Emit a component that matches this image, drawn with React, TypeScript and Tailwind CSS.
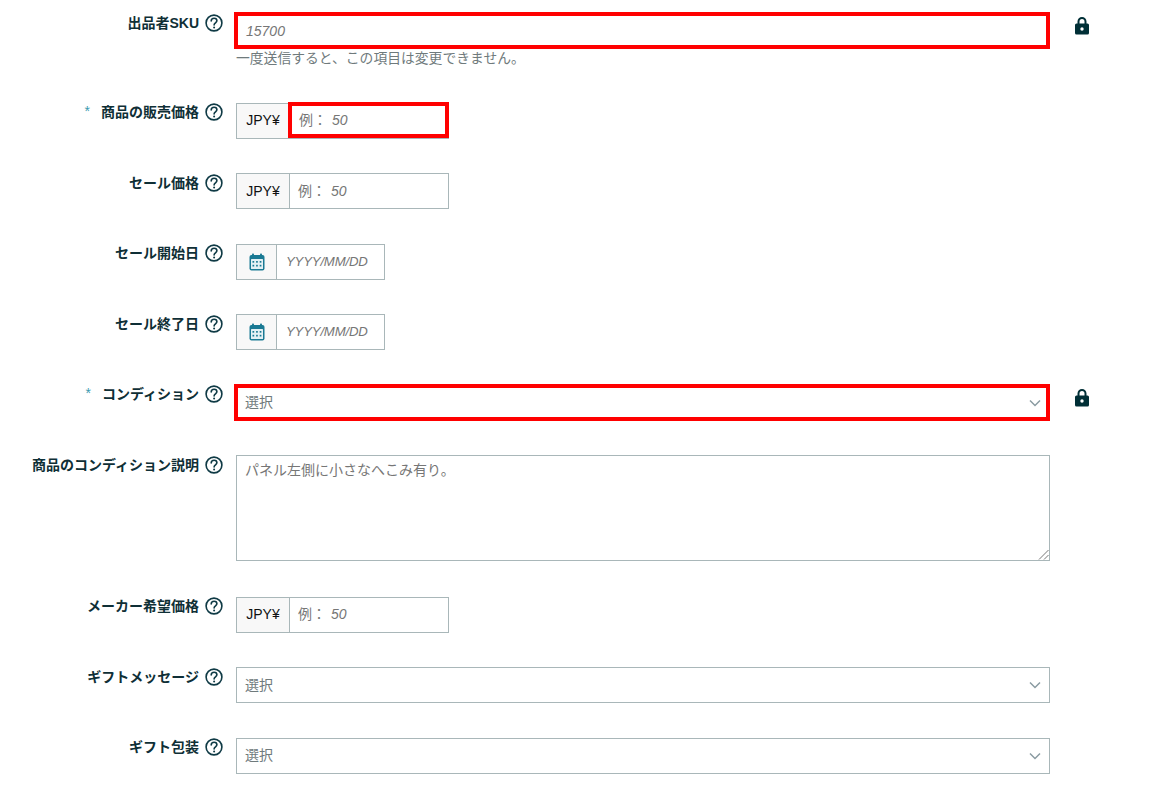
import { ReactNode } from "react";

const font = "font-['Liberation_Sans','Noto_Sans_CJK_JP',sans-serif]";

function HelpIcon() {
  return (
    <svg className="w-[18px] h-[18px] shrink-0" viewBox="0 0 18 18" fill="none">
      <circle cx="9" cy="9" r="7.900" stroke="#0f3a45" strokeWidth="1.600" />
      <path d="M6.200 7c0-1.700 1.300-2.800 2.900-2.800S11.900 5.300 11.900 6.800c0 1.900-2.800 2.100-2.800 4.100" stroke="#0f3a45" strokeWidth="1.600" strokeLinecap="round" />
      <circle cx="9.100" cy="13.400" r="1" fill="#0f3a45" />
    </svg>
  );
}

function LockIcon() {
  return (
    <svg className="w-4 h-[19px]" viewBox="0 0 16 19">
      <path d="M4.500 9V5.500a3.500 3.500 0 0 1 7 0V9" fill="none" stroke="#002f36" strokeWidth="2" />
      <rect x="1" y="7.500" width="14" height="11" rx="1.500" fill="#002f36" />
      <circle cx="8" cy="13" r="1.700" fill="#fff" />
    </svg>
  );
}

function CalendarIcon() {
  return (
    <svg className="w-4 h-[18px]" viewBox="0 0 16 18">
      <rect x="0.500" y="2" width="15" height="15.500" rx="2" fill="#1b7a94" />
      <rect x="3" y="0.500" width="2" height="3" rx="0.800" fill="#1b7a94" />
      <rect x="11" y="0.500" width="2" height="3" rx="0.800" fill="#1b7a94" />
      <rect x="2" y="6" width="12" height="10" rx="0.500" fill="#e4f0f4" />
      <g fill="#1b7a94">
        <rect x="3.500" y="8" width="1.700" height="1.700" />
        <rect x="7.100" y="8" width="1.700" height="1.700" />
        <rect x="10.700" y="8" width="1.700" height="1.700" />
        <rect x="3.500" y="11.800" width="1.700" height="1.700" />
        <rect x="7.100" y="11.800" width="1.700" height="1.700" />
        <rect x="10.700" y="11.800" width="1.700" height="1.700" />
      </g>
    </svg>
  );
}

function Chevron() {
  return (
    <svg className="w-3 h-2" viewBox="0 0 12 8" fill="none">
      <path d="M1 1.500l5 5 5-5" stroke="#8a9ba1" strokeWidth="1.500" />
    </svg>
  );
}

function Row({ label, required, locked, className, children }: { label: string; required?: boolean; locked?: boolean; className?: string; children: ReactNode }) {
  return (
    <div className={`flex items-start ${className ?? ""}`}>
      <div className="w-[223px] shrink-0 flex justify-end items-center gap-[6px] -mt-[0.5px]">
        {required && <span className="text-[14px] leading-5 text-[#3a9bb0] mr-[5px] -mt-[3px]">*</span>}
        <span className="text-[14px] leading-5 font-bold text-[#0f2f36] whitespace-nowrap">{label}</span>
        <HelpIcon />
      </div>
      <div className="ml-[13px] w-[814px] shrink-0">{children}</div>
      {locked && (
        <div className="ml-6 pt-[3px]">
          <LockIcon />
        </div>
      )}
    </div>
  );
}

function Red({ className }: { className: string }) {
  return <div className={`absolute border-4 border-[#ff0000] ${className}`} />;
}

function Select({ highlight }: { highlight?: boolean }) {
  return (
    <div className="relative h-9 border border-[#a9b7b9] bg-white flex items-center justify-between pl-2 pr-[8px]">
      <span className="text-[14px] text-[#6f7a7c]">選択</span>
      <Chevron />
      {highlight && <Red className="-left-[3px] -top-[2px] -right-px -bottom-px" />}
    </div>
  );
}

function Money({ highlight }: { highlight?: boolean }) {
  return (
    <div className="relative flex h-9 w-[213px] border border-[#a9b7b9] bg-white">
      <div className="w-[53px] shrink-0 bg-[#f8f8f8] border-r border-[#a9b7b9] flex items-center justify-center text-[14px] text-[#0f1111]">JPY¥</div>
      <div className={`flex items-center text-[14px] text-[#767676] ${highlight ? "pl-[9px]" : "pl-2"}`}>
        <span>例：</span>
        <span className="italic ml-[5px]">50</span>
      </div>
      {highlight && <Red className="left-[51px] -top-[2px] -right-px bottom-0" />}
    </div>
  );
}

function DateBox() {
  return (
    <div className="flex h-9 w-[149px] border border-[#a9b7b9] bg-white">
      <div className="w-10 shrink-0 bg-[#f8f8f8] border-r border-[#a9b7b9] flex items-center justify-center">
        <CalendarIcon />
      </div>
      <div className="flex items-center pl-[9px] text-[13.200px] italic text-[#767676] tracking-[-0.2px]">YYYY/MM/DD</div>
    </div>
  );
}

export default function App() {
  return (
    <div className={`${font} w-[1152px] h-[790px] overflow-hidden bg-white pt-[13px]`}>
      <Row label="出品者SKU" locked className="mb-[33.800px]">
        <div className="relative h-9 border border-[#a9b7b9] flex items-center pl-[9px] text-[14px] italic text-[#767676]">
          15700
          <Red className="-left-[3px] -top-[2px] -right-px -bottom-px" />
        </div>
        <p className="text-[13.800px] leading-5 text-[#6f7a7c] whitespace-nowrap">一度送信すると、この項目は変更できません。</p>
      </Row>
      <Row label="商品の販売価格" required className="mb-[34.500px]">
        <Money highlight />
      </Row>
      <Row label="セール価格" className="mb-[34.500px]">
        <Money />
      </Row>
      <Row label="セール開始日" className="mb-[34.500px]">
        <DateBox />
      </Row>
      <Row label="セール終了日" className="mb-[34.500px]">
        <DateBox />
      </Row>
      <Row label="コンディション" required locked className="mb-[34.500px]">
        <Select highlight />
      </Row>
      <Row label="商品のコンディション説明" className="mb-[35.500px]">
        <div className="relative h-[106px] border border-[#a9b7b9] px-2 py-[4px] text-[14px] leading-5 text-[#767676]">
          パネル左側に小さなへこみ有り。
          <svg className="absolute right-0 bottom-0 w-[11px] h-[11px]" viewBox="0 0 11 11" stroke="#777" strokeWidth="1">
            <path d="M1 10.500L10.500 1M6 10.500L10.500 6" />
          </svg>
        </div>
      </Row>
      <Row label="メーカー希望価格" className="mb-[34.500px]">
        <Money />
      </Row>
      <Row label="ギフトメッセージ" className="mb-[34.500px]">
        <Select />
      </Row>
      <Row label="ギフト包装">
        <Select />
      </Row>
    </div>
  );
}
